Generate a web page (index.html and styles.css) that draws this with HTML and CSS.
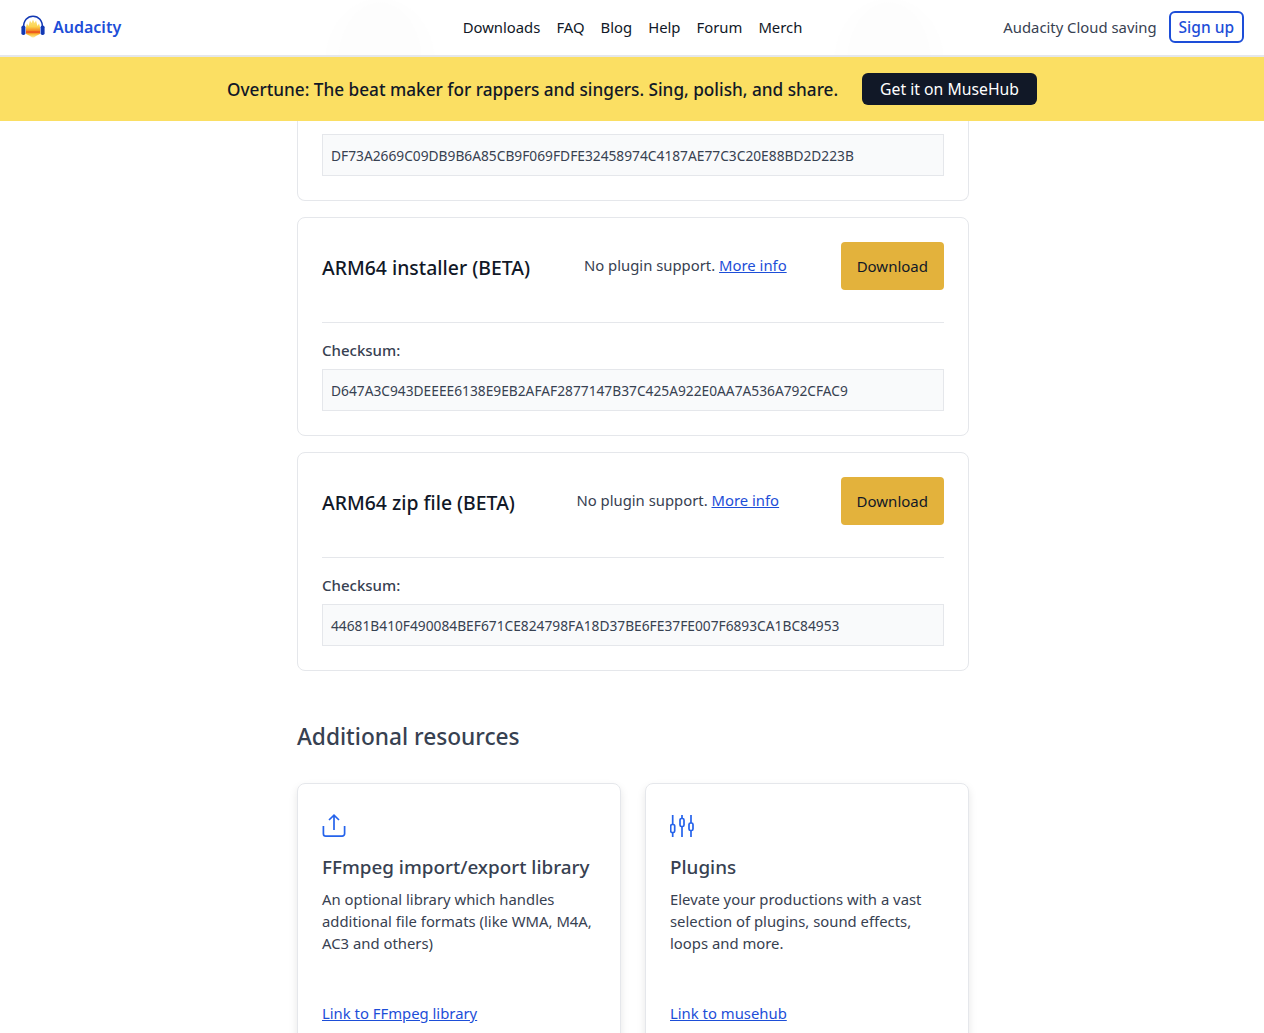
FILE: index.html
```html
<!DOCTYPE html>
<html lang="en">
<head>
    <meta charset="UTF-8">
    <meta name="viewport" content="width=device-width, initial-scale=1.0">
    <title>Audacity - Download for Windows</title>
    <link rel="stylesheet" href="styles.css">
</head>
<body>
    <header class="top">
        <nav class="nav">
            <a class="brand" href="#">
                <svg class="brand-logo" viewBox="0 0 24 24" width="24" height="24" aria-hidden="true">
                    <defs>
                        <linearGradient id="wave" x1="0" y1="0" x2="0" y2="1">
                            <stop offset="0" stop-color="#fde68a"/>
                            <stop offset="0.4" stop-color="#fcd34d"/>
                            <stop offset="0.62" stop-color="#f58a22"/>
                            <stop offset="0.7" stop-color="#e8421c"/>
                            <stop offset="0.8" stop-color="#fbb62c"/>
                            <stop offset="1" stop-color="#fdeea0"/>
                        </linearGradient>
                    </defs>
                    <path d="M5 12 L6 8.5 L7.5 11 L9 5.5 L10.5 8 L12 4.5 L13.5 8 L15 5.5 L16.5 11 L18 8.5 L19 12 L19 19 L17 20 L15 21 L13 22.5 L11 22.5 L9 21 L7 20 L5 19 Z" fill="url(#wave)"/>
                    <path d="M2.6 13 C2.2 5.5 6.5 1.2 12 1.2 C17.5 1.2 21.8 5.5 21.4 13" fill="none" stroke="#1238b4" stroke-width="1.5"/>
                    <rect x="0.4" y="10.5" width="4" height="9.5" rx="1.8" fill="#1238b4"/>
                    <rect x="19.6" y="10.5" width="4" height="9.5" rx="1.8" fill="#1238b4"/>
                </svg>
                <span>Audacity</span>
            </a>
            <ul class="nav-links">
                <li><a href="#">Downloads</a></li>
                <li><a href="#">FAQ</a></li>
                <li><a href="#">Blog</a></li>
                <li><a href="#">Help</a></li>
                <li><a href="#">Forum</a></li>
                <li><a href="#">Merch</a></li>
            </ul>
            <div class="nav-right">
                <a class="cloud" href="#">Audacity Cloud saving</a>
                <a class="signup" href="#">Sign up</a>
            </div>
        </nav>
        <div class="banner">
            <p>Overtune: The beat maker for rappers and singers. Sing, polish, and share.</p>
            <a class="banner-btn" href="#">Get it on MuseHub</a>
        </div>
    </header>

    <main class="main">
        <section class="downloads">
            <div class="card card-cut">
                <div class="sum-field">DF73A2669C09DB9B6A85CB9F069FDFE32458974C4187AE77C3C20E88BD2D223B</div>
            </div>

            <div class="card">
                <div class="card-head">
                    <h3>ARM64 installer (BETA)</h3>
                    <p>No plugin support. <a href="#">More info</a></p>
                    <a class="dl-btn" href="#">Download</a>
                </div>
                <div class="card-sum">
                    <div class="sum-label">Checksum:</div>
                    <div class="sum-field">D647A3C943DEEEE6138E9EB2AFAF2877147B37C425A922E0AA7A536A792CFAC9</div>
                </div>
            </div>

            <div class="card">
                <div class="card-head">
                    <h3>ARM64 zip file (BETA)</h3>
                    <p>No plugin support. <a href="#">More info</a></p>
                    <a class="dl-btn" href="#">Download</a>
                </div>
                <div class="card-sum">
                    <div class="sum-label">Checksum:</div>
                    <div class="sum-field">44681B410F490084BEF671CE824798FA18D37BE6FE37FE007F6893CA1BC84953</div>
                </div>
            </div>
        </section>

        <h2 class="res-title">Additional resources</h2>
        <section class="res-grid">
            <div class="res-card">
                <svg class="res-icon" viewBox="0 0 24 24" width="24" height="24" fill="none" stroke="currentColor" stroke-width="1.7" aria-hidden="true">
                    <path d="M7 6 12 1.2 17 6M12 1.2V16"/>
                    <path d="M1.4 12v7.7a2.4 2.4 0 0 0 2.4 2.4h16.4a2.4 2.4 0 0 0 2.4-2.4V12"/>
                </svg>
                <h3>FFmpeg import/export library</h3>
                <p>An optional library which handles additional file formats (like WMA, M4A, AC3 and others)</p>
                <a href="#">Link to FFmpeg library</a>
            </div>
            <div class="res-card">
                <svg class="res-icon" viewBox="0 0 24 24" width="24" height="24" fill="none" stroke="currentColor" stroke-width="1.7" aria-hidden="true">
                    <path d="M2.7 1v9.5M2.7 18.5V23M12 1v3.5M12 12.5V23M21 1v8M21 16.5V23"/>
                    <rect x="0.7" y="10.5" width="4" height="8" rx="1.6"/>
                    <rect x="10" y="4.5" width="4" height="8" rx="1.6"/>
                    <rect x="19" y="9" width="4" height="7.5" rx="1.6"/>
                </svg>
                <h3>Plugins</h3>
                <p>Elevate your productions with a vast selection of plugins, sound effects, loops and more.</p>
                <a href="#">Link to musehub</a>
            </div>
        </section>
    </main>
</body>
</html>
```

FILE: styles.css
```css
body {
    margin: 0;
    font-family: "Noto Sans", sans-serif;
    font-size: 14.85px;
    color: #374151;
    background: #fff;
    height: 1033px;
    overflow: hidden;
}
a {
    color: inherit;
    text-decoration: none;
}
h2, h3, p, ul {
    margin: 0;
    padding: 0;
}

/* Header */
.nav {
    display: grid;
    grid-template-columns: 1fr auto 1fr;
    align-items: center;
    height: 53px;
    padding: 0 20px 2px 21px;
    /* faint arcs showing through the bar */
    background:
        radial-gradient(ellipse 42px 58px at 380px 60px, #fdfdfd 98%, transparent 100%),
        radial-gradient(ellipse 55px 62px at 380px 60px, #fefefe 98%, transparent 100%),
        radial-gradient(ellipse 42px 58px at 889px 60px, #fdfdfd 98%, transparent 100%),
        radial-gradient(ellipse 55px 62px at 889px 60px, #fefefe 98%, transparent 100%),
        #fff;
    border-bottom: 2px solid #e5e7eb;
}
.brand {
    display: flex;
    align-items: center;
    gap: 8px;
    color: #1d4ed8;
    font-size: 16px;
    font-weight: 600;
}
.nav-links {
    display: flex;
    gap: 16px;
    list-style: none;
    color: #111827;
}
.nav-right {
    display: flex;
    justify-content: flex-end;
    align-items: center;
    gap: 12px;
}
.signup {
    padding: 3px 8px;
    border: 2px solid #1d4ed8;
    border-radius: 6px;
    color: #1d4ed8;
    font-size: 15.5px;
    font-weight: 500;
    line-height: 22px;
}
.banner {
    display: flex;
    justify-content: center;
    align-items: center;
    gap: 24px;
    height: 64px;
    background: #fbdf63;
    color: #111827;
    font-size: 17.2px;
    font-weight: 500;
}
.banner-btn {
    padding: 5px 18px;
    border-radius: 6px;
    background: #111827;
    color: #fff;
    font-size: 15.75px;
    font-weight: 400;
    line-height: 22px;
}

/* Download cards */
.main {
    width: 672px;
    margin: 0 auto;
    padding-left: 2px;
}
.downloads {
    display: flex;
    flex-direction: column;
    gap: 16px;
}
.card {
    padding: 24px;
    border: 1px solid #e5e7eb;
    border-radius: 8px;
}
.card-cut {
    padding-top: 13px;
    border-top: 0;
    border-radius: 0 0 8px 8px;
}
.card-head {
    display: flex;
    justify-content: space-between;
    align-items: center;
    padding-bottom: 32px;
    border-bottom: 1px solid #e5e7eb;
}
.card-head h3 {
    padding-top: 2px;
    color: #111827;
    font-size: 19.4px;
    font-weight: 500;
}
.card-head p {
    padding-bottom: 2px;
    color: #374151;
}
.card-head p a,
.res-card a {
    color: #1d4ed8;
    text-decoration: underline;
}
.dl-btn {
    padding: 12px 16px;
    border-radius: 4px;
    background: #e3b23c;
    color: #111827;
    font-size: 15px;
    line-height: 24px;
}
.card-sum {
    padding-top: 16px;
}
.sum-label {
    margin-bottom: 8px;
    font-size: 15px;
    font-weight: 500;
    line-height: 22px;
}
.sum-field {
    padding: 12px 8px 10px;
    border: 1px solid #e5e7eb;
    background: #f9fafb;
    font-size: 13.75px;
    line-height: 18px;
}

/* Additional resources */
.res-title {
    margin: 48px 0 28px;
    font-size: 22.7px;
    font-weight: 500;
    line-height: 36px;
}
.res-grid {
    display: grid;
    grid-template-columns: 1fr 1fr;
    gap: 24px;
}
.res-card {
    display: flex;
    flex-direction: column;
    align-items: flex-start;
    height: 300px;
    padding: 30px 24px 24px;
    border: 1px solid #e5e7eb;
    border-radius: 8px;
    box-shadow: 0 4px 8px rgba(0, 0, 0, 0.1);
}
.res-icon {
    color: #2563eb;
}
.res-card h3 {
    margin-top: 14px;
    font-size: 18.85px;
    font-weight: 500;
    line-height: 30px;
}
.res-card p {
    margin-top: 6px;
    line-height: 22px;
    height: 115px;
}
```
